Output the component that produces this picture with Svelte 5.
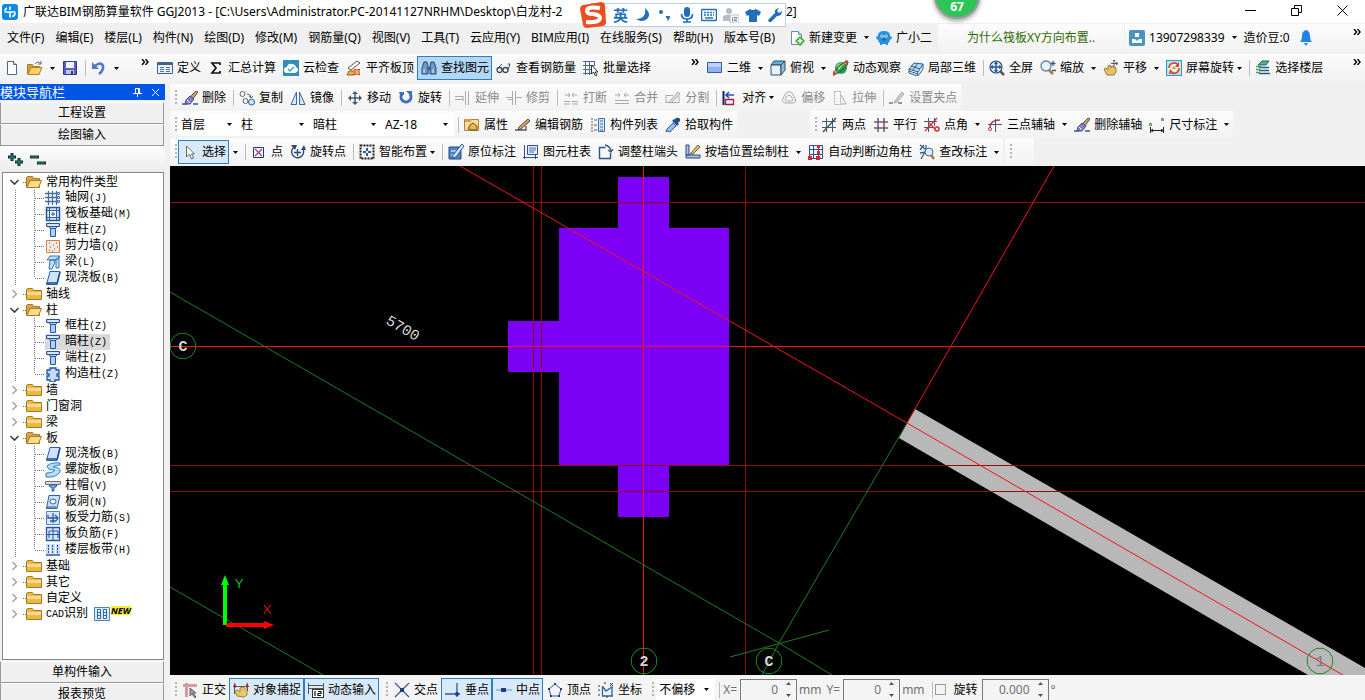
<script lang="ts">
  type Item = { icon?: string; text?: string; split?: boolean; drop?: boolean; off?: boolean; on?: boolean; sep?: boolean; name?: string };

  const menus = ['文件(F)', '编辑(E)', '楼层(L)', '构件(N)', '绘图(D)', '修改(M)', '钢筋量(Q)', '视图(V)', '工具(T)', '云应用(Y)', 'BIM应用(I)', '在线服务(S)', '帮助(H)', '版本号(B)'];

  const fileTools: Item[] = [
    { icon: 'new', name: '新建' },
    { icon: 'open', name: '打开', split: true },
    { icon: 'save', name: '保存' },
    { sep: true },
    { icon: 'undo', name: '撤销', split: true },
  ];
  const mainTools: Item[] = [
    { icon: 'define', text: '定义' },
    { icon: 'sigma', text: '汇总计算' },
    { icon: 'cloud', text: '云检查' },
    { icon: 'slabtop', text: '平齐板顶' },
    { icon: 'binoculars', text: '查找图元', on: true },
    { icon: 'glasses', text: '查看钢筋量' },
    { icon: 'batch', text: '批量选择' },
  ];
  const viewTools: Item[] = [
    { icon: 'plane', text: '二维', split: true },
    { icon: 'cube', text: '俯视', split: true },
    { icon: 'orbit', text: '动态观察' },
    { icon: 'part3d', text: '局部三维' },
    { sep: true },
    { icon: 'full', text: '全屏' },
    { icon: 'zoom', text: '缩放', split: true },
    { icon: 'pan', text: '平移', split: true },
    { icon: 'screenrot', text: '屏幕旋转', drop: true },
    { sep: true },
    { icon: 'floors', text: '选择楼层' },
  ];
  const editTools: Item[] = [
    { icon: 'brush', text: '删除' },
    { sep: true },
    { icon: 'copy', text: '复制' },
    { icon: 'mirror', text: '镜像' },
    { sep: true },
    { icon: 'move', text: '移动' },
    { icon: 'rotate', text: '旋转' },
    { sep: true },
    { icon: 'extend', text: '延伸', off: true },
    { icon: 'trim', text: '修剪', off: true },
    { sep: true },
    { icon: 'break', text: '打断', off: true },
    { icon: 'join', text: '合并', off: true },
    { icon: 'divide', text: '分割', off: true },
    { sep: true },
    { icon: 'align', text: '对齐', drop: true },
    { icon: 'offset', text: '偏移', off: true },
    { icon: 'stretch', text: '拉伸', off: true },
    { sep: true },
    { icon: 'grippt', text: '设置夹点', off: true },
  ];
  const combos = [
    { label: '楼层', value: '首层' },
    { label: '构件大类', value: '柱' },
    { label: '构件类型', value: '暗柱' },
    { label: '构件名称', value: 'AZ-18' },
  ];
  const memberTools: Item[] = [
    { sep: true },
    { icon: 'props', text: '属性' },
    { icon: 'editbar', text: '编辑钢筋' },
    { icon: 'list', text: '构件列表' },
    { icon: 'picker', text: '拾取构件' },
  ];
  const axisTools: Item[] = [
    { icon: 'axis2', text: '两点' },
    { icon: 'parallel', text: '平行' },
    { icon: 'ptangle', text: '点角', split: true },
    { icon: 'axis3', text: '三点辅轴', split: true },
    { icon: 'brush', text: '删除辅轴' },
    { icon: 'dim', text: '尺寸标注', split: true },
  ];
  const drawTools: Item[] = [
    { icon: 'cursor', text: '选择', on: true, split: true },
    { sep: true },
    { icon: 'point', text: '点' },
    { icon: 'rotpoint', text: '旋转点' },
    { sep: true },
    { icon: 'smart', text: '智能布置', drop: true },
    { sep: true },
    { icon: 'note', text: '原位标注' },
    { icon: 'coltable', text: '图元柱表' },
    { icon: 'adjust', text: '调整柱端头' },
    { icon: 'bywall', text: '按墙位置绘制柱', split: true },
    { icon: 'corner', text: '自动判断边角柱' },
    { icon: 'check', text: '查改标注', split: true },
  ];
  const snapTools: Item[] = [
    { icon: 'ortho', text: '正交' },
    { icon: 'snap', text: '对象捕捉', on: true },
    { icon: 'dyn', text: '动态输入', on: true },
  ];
  const pointTools: Item[] = [
    { icon: 'cross', text: '交点' },
    { icon: 'perp', text: '垂点', on: true },
    { icon: 'mid', text: '中点', on: true },
    { icon: 'vertex', text: '顶点' },
    { icon: 'coord', text: '坐标' },
  ];

  type Leaf = { icon: string; text: string; key: string };
  const tree: { text: string; pre?: string; items?: Leaf[]; badge?: boolean }[] = [
    {
      text: '常用构件类型',
      items: [
        { icon: 'tgrid', text: '轴网', key: '(J)' },
        { icon: 'raft', text: '筏板基础', key: '(M)' },
        { icon: 'column', text: '框柱', key: '(Z)' },
        { icon: 'wall', text: '剪力墙', key: '(Q)' },
        { icon: 'beam', text: '梁', key: '(L)' },
        { icon: 'slab', text: '现浇板', key: '(B)' },
      ],
    },
    { text: '轴线' },
    {
      text: '柱',
      items: [
        { icon: 'column', text: '框柱', key: '(Z)' },
        { icon: 'column', text: '暗柱', key: '(Z)' },
        { icon: 'column', text: '端柱', key: '(Z)' },
        { icon: 'conscol', text: '构造柱', key: '(Z)' },
      ],
    },
    { text: '墙' },
    { text: '门窗洞' },
    { text: '梁' },
    {
      text: '板',
      items: [
        { icon: 'slab', text: '现浇板', key: '(B)' },
        { icon: 'spiral', text: '螺旋板', key: '(B)' },
        { icon: 'cap', text: '柱帽', key: '(V)' },
        { icon: 'hole', text: '板洞', key: '(N)' },
        { icon: 'slabbar', text: '板受力筋', key: '(S)' },
        { icon: 'negbar', text: '板负筋', key: '(F)' },
        { icon: 'strip', text: '楼层板带', key: '(H)' },
      ],
    },
    { text: '基础' },
    { text: '其它' },
    { text: '自定义' },
    { pre: 'CAD', text: '识别', badge: true },
  ];
  let selected = $state('暗柱');

  const line = (c: string) => `stroke="${c}" fill="none"`;
  const icons: Record<string, string> = {
    app: `<rect width="16" height="16" rx="3" fill="#0b8be6"/><path d="M8 2.500V6M8 8v5.500M2.500 8h11M5 4Q3 5 3 7M13 9q0 3-3 3.500" stroke="#fff" stroke-width="1.600" fill="none"/>`,
    newchange: `<path d="M2.500 1.500h7l3 3v10h-10z" fill="#fff" stroke="#5a92bd"/><path d="M9.500 1.500v3h3" fill="#cfe3f3" stroke="#5a92bd"/><path d="M11 6l5 5-5 5-5-5z" fill="#3fae2a"/><path d="M11 8.500v5M8.500 11h5" stroke="#fff" stroke-width="1.500"/>`,
    mascot: `<path d="M8 1q6 0 6 5l2 1-1 3-1-1q0 3-2 4v2h-2v-1H6v1H4v-2q-2-1-2-4l-1 1-1-3 2-1q0-5 6-5z" fill="#1f93dc"/><circle cx="6" cy="6" r="1.600" fill="#fff"/><circle cx="10" cy="6" r="1.600" fill="#fff"/><circle cx="6" cy="6" r=".7" fill="#124"/><circle cx="10" cy="6" r=".7" fill="#124"/><path d="M6 9h4q-2 3-4 0z" fill="#0c4d86"/>`,
    user: `<rect width="16" height="16" rx="2" fill="#4a93bb"/><path d="M6 3h4v4H6z" fill="#fff"/><path d="M3 13V9h3l2 2 2-2h3v4z" fill="#fff"/>`,
    bell: `<path d="M8 0q4 1 4 6 0 4 2 6H2q2-2 2-6 0-5 4-6z" fill="#2383ee"/><path d="M6 13h4l-2 3z" fill="#2383ee"/>`,
    new: `<path d="M3.500 1.500h6l3 3v10h-9z" fill="#fff" stroke="#53657f"/><path d="M9.500 1.500v3h3" fill="#dbe4f0" stroke="#53657f"/>`,
    open: `<path d="M.500 14V4.500h5l1 2h6V14z" fill="#d59b32" stroke="#a7792c"/><path d="M1 14.500l3-7h11l-3 7z" fill="#f8cf68" stroke="#b98023"/><path d="M8 4q3-4 6 0M14 1v3h-3" stroke="#496c91" fill="none"/>`,
    save: `<path d="M1.500 1.500h13v13h-13z" fill="#5961bd" stroke="#353b8b"/><path d="M4 2h8v6H4z" fill="#f1f4fb"/><path d="M4 10h8v4H4z" fill="#bcc5e5"/><path d="M9 11h2v3H9z" fill="#30357a"/>`,
    undo: `<path d="M4 6q6-5 8 0 1 4-4 8" stroke="#4f78c4" stroke-width="2.600" fill="none"/><path d="M1 2v7h7z" fill="#4f78c4"/>`,
    define: `<path d="M.500 2.500h15v11H.500z" fill="#edf3fb" stroke="#3f628e"/><path d="M1 4h14" stroke="#3f628e" stroke-width="2"/><path d="M3 7.500h4M3 9.500h4M3 11.500h4M9 7.500h4M9 9.500h4M9 11.500h4" stroke="#4974a5"/>`,
    sigma: `<path d="M12 5V3H4l4 5-4 5h8v-2" stroke="#111" stroke-width="1.700" fill="none"/>`,
    cloud: `<rect width="16" height="16" fill="#328eb8"/><path d="M4 13q-3 0-3-3t3-3q1-4 5-3 3 0 4 3 2 1 2 3t-3 3z" fill="#fff"/><path d="M5 9l2 2 4-4" stroke="#3aa8c6" stroke-width="1.500" fill="none"/>`,
    slabtop: `<path d="M2 8l9-7 3 2-9 7z" fill="#fff" stroke="#555"/><path d="M3 11h5v4H1z" fill="#f4b23d" stroke="#a35a1b"/><path d="M8 9h6v6H8z" fill="#c9412c"/><path d="M8 11h6M8 13h6M11 9v6" stroke="#ffd08a"/>`,
    binoculars: `<path d="M3 2h3l1 4v8H1V8zM10 2h3l2 6v6H9V6z" fill="#6f98c4" stroke="#244c7b"/><path d="M6 7h4v3H6z" fill="#315f91"/><path d="M3 9v4M12 9v4" stroke="#e9f3fd"/>`,
    glasses: `<circle cx="3.500" cy="10" r="2.500" ${line('#364b60')} stroke-width="1.300"/><circle cx="9.500" cy="10" r="2.500" ${line('#364b60')} stroke-width="1.300"/><path d="M6 9h1M2 8l4-4M12 10l2-6h-2" ${line('#364b60')}/>`,
    batch: `<path d="M0 1.500h12M0 5.500h12M0 9.500h8M0 13.500h8M2.500 1v14M6.500 1v14M11.500 1v5" ${line('#4d6c8c')}/><path d="M8.500 5v9l2-2 2 4 1.500-1-2-3h3z" fill="#fff" stroke="#333"/>`,
    plane: `<path d="M.500 2.500h14v10H.500z" fill="#8fb2f0" stroke="#365f9f"/><path d="M1 3h13v4H1z" fill="#bcd2fa"/>`,
    cube: `<path d="M4 1h11l-4 4H1z" fill="#62b1dd" stroke="#294f71"/><path d="M1 5h10v10H1z" fill="#e8f1f7" stroke="#294f71"/><path d="M11 5l4-4v9l-4 5z" fill="#9db9ce" stroke="#294f71"/>`,
    orbit: `<circle cx="8" cy="8" r="6" fill="#2f9c55"/><path d="M3 6q4-5 8-2l-5 6z" fill="#a7df70"/><path d="M1 14Q2 7 14 1q3 4-9 12z" ${line('#365')} stroke-width="1.300"/><path d="M12 0l4 2-3 4zM0 11l4 3-4 2z" fill="#d33b25"/>`,
    part3d: `<path d="M1 9l5-6 9 1-5 8z" fill="#b7dbf5"/><path d="M1 9v4l8 3 1-4M1 9l9 3 5-8-9-1zM10 16l5-7V4M3 6l9 3M5 10l5-7M1 11l9 3" ${line('#285f8e')}/>`,
    full: `<circle cx="7" cy="7" r="6" fill="#dcecff" stroke="#384f67" stroke-width="1.200"/><path d="M7 2v10M2 7h10" ${line('#285896')} stroke-width="1.500"/><path d="M5 4l2-3 2 3zM5 10l2 3 2-3zM4 5L1 7l3 2zM10 5l3 2-3 2z" fill="#285896"/><path d="M11 11l4 4" stroke="#6b5141" stroke-width="2.500"/>`,
    zoom: `<circle cx="6" cy="6" r="5" fill="#e8f4fd" stroke="#6a8298" stroke-width="1.300"/><path d="M9 10l4 4" stroke="#a57b42" stroke-width="2.500"/><path d="M13 1v5M10.500 3.500h5M12 10.500h4" stroke="#355784" stroke-width="1.300"/>`,
    pan: `<path d="M4 15L1 9l2-1 2 2V6l2-1 1 3 1-2 2 1 2 1v4l-2 3z" fill="#e9c26e" stroke="#a27430"/><path d="M11 0v7M8 3.500h6M10 1l1-1 1 1M13 2l2 1.500-2 1.500" ${line('#555')}/>`,
    screenrot: `<rect x=".500" y=".500" width="15" height="15" fill="#b5e2f7" stroke="#3f92bc"/><circle cx="8" cy="8" r="6" fill="#fff6d5"/><path d="M3 8a5 5 0 0 1 9-3M13 8a5 5 0 0 1-7 5" ${line('#d84343')} stroke-width="1.700"/><path d="M13 2v5H9zM3 14l1-5 4 4z" fill="#d84343"/><path d="M6 9l2-3 2 3z" fill="#7bb35b"/>`,
    floors: `<path d="M3 5l4-4h7l-3 4z" fill="#59b57e" stroke="#245e85"/><path d="M4 7.500h10M4 10.500h10M4 13.500h11" stroke="#245e85" stroke-width="1.600"/><path d="M1 6.500h5M1 9.500h4M1 12.500h4" stroke="#45a057" stroke-width="1.300"/>`,
    brush: `<path d="M14 1l2 1-6 8-3-2z" fill="#c5a16b" stroke="#555"/><path d="M8 6l4 3-4 5H3l1-4z" fill="#8580c7" stroke="#4c4780"/><path d="M5 10l3 3" stroke="#fff"/><path d="M0 14h5M11 14h5" stroke="#315f91" stroke-width="1.600"/>`,
    copy: `<circle cx="3.500" cy="4" r="2.500" ${line('#596774')}/><circle cx="6.500" cy="11" r="2.500" ${line('#596774')}/><circle cx="12.500" cy="12" r="3" fill="#c9e3fa" stroke="#315f91"/><path d="M8 4q4 0 4 4M10 6l2 2 2-2" ${line('#596774')}/>`,
    mirror: `<path d="M6.500 2v12.500H1zM9.500 2v12.500H15z" fill="#d7e7fb" stroke="#3e679a"/>`,
    move: `<path d="M8 2v12M2 8h12" stroke="#405a75" stroke-width="1.500"/><path d="M5 4l3-3 3 3zM5 12l3 3 3-3zM4 5L1 8l3 3zM12 5l3 3-3 3z" fill="#405a75"/>`,
    rotate: `<path d="M4 4a5 5 0 1 0 8 0" stroke="#3c70b9" stroke-width="3" fill="none"/><path d="M8 1h6v6z" fill="#3c70b9"/><path d="M1 2h5v3H2z" fill="#3c70b9"/>`,
    extend: `<path d="M0 6.500h8M0 9.500h8M10.500 1v14M13.500 1v14" ${line('#aaa')}/><path d="M8 6v5" stroke="#aaa"/>`,
    trim: `<path d="M6.500 1v14M9.500 1v14M0 7.500h6M10 7.500h6M2 9.500h4" ${line('#aaa')}/>`,
    break: `<path d="M1 11.500h6M9 11.500h6M1 14h6M9 14h6M2 5h4M5 3l2 2-2 2M14 5h-4M11 3L9 5l2 2" ${line('#aaa')}/>`,
    join: `<path d="M1 10.500h14M1 13.500h14M1 5h5M4 3l2 2-2 2M15 5h-5M12 3l-2 2 2 2" ${line('#aaa')}/>`,
    divide: `<path d="M1 5.500h7M1 12.500h13V6M1 5v8" ${line('#aaa')}/><path d="M4 12L13 2l2 2-9 9z" fill="#ddd" stroke="#aaa"/>`,
    align: `<path d="M1.500 1v14" stroke="#17215d" stroke-width="2"/><path d="M4 5h8M7 2L4 5l3 3" ${line('#224eb3')} stroke-width="1.600"/><path d="M3.500 9.500h8v5h-8z" fill="#eef" stroke="#a4213e" stroke-width="1.300"/>`,
    offset: `<path d="M4 13q-4-1-2-5l3-5q3-3 6 0l3 5q2 4-2 5zM5 11q-2-1 0-3l1-2q2-2 4 0l1 2q2 2 0 3z" ${line('#aaa')}/>`,
    stretch: `<path d="M2.500 1.500h6v13h-6z" ${line('#aaa')} stroke-dasharray="2 1"/><path d="M9 5l5 9H9" ${line('#aaa')}/>`,
    grippt: `<path d="M0 13h4M9 13h4" stroke="#999" stroke-width="2"/><path d="M6 11L13 2l2 2-7 8-3 1z" fill="#ccc" stroke="#aaa"/>`,
    props: `<path d="M.500 2.500h14v11h-14z" fill="#f8dda0" stroke="#b0803c"/><path d="M1 2h6v3H1z" fill="#d7a040"/><path d="M4 12l2-4 3-2 4 3v4H8z" fill="#e9b844" stroke="#73501e"/>`,
    editbar: `<path d="M0 13h11V9" ${line('#555')} stroke-width="1.300"/><path d="M4 10L13 2l2 2-9 8-3 1z" fill="#d9a05b" stroke="#5c4935"/>`,
    list: `<path d="M8.500 1.500h6v13h-6z" fill="#d7e8fb" stroke="#3d6ca0"/><path d="M10 4h3M10 7h3M10 10h3M10 13h3" stroke="#3d6ca0"/><path d="M1 2h2M1 5h2M1 8h2M1 11h2M1 14h2M4 3h3M4 8h3M4 13h3" stroke="#555"/>`,
    picker: `<path d="M9 3l2-2q3-1 4 1t-1 3l-2 2z" fill="#214d8a"/><path d="M8 3l5 5" stroke="#214d8a" stroke-width="2.500"/><path d="M8 6l3 3-6 6-3-1-1 1 1-3z" fill="#8fc1e8" stroke="#2f66a3"/>`,
    axis2: `<path d="M0 4.500h14M0 10.500h14M4.500 1v14M10.500 1v14" ${line('#4b5580')}/><path d="M1 15L14 1" stroke="#3b5b3b" stroke-width="1.400"/>`,
    parallel: `<path d="M1 5h14M1 11h14" stroke="#a34a58" stroke-width="1.400"/><path d="M5 1v14M11 1v14" stroke="#4b5580" stroke-width="1.400"/>`,
    ptangle: `<path d="M0 4.500h13M0 10.500h9M4.500 1v14M10.500 1v8" ${line('#4b5580')}/><path d="M1 14L13 1M4 5l8 8" stroke="#c33" stroke-width="1.300"/><circle cx="13" cy="12" r="2" fill="#fff" stroke="#c33" stroke-width="1.500"/>`,
    axis3: `<path d="M3 13Q2 3 13 3" ${line('#c0333d')} stroke-width="1.500"/><path d="M1 7.500h14M8.500 2v13" ${line('#4b5580')}/><circle cx="3" cy="12" r="1.500" fill="#fff" stroke="#c33"/>`,
    dim: `<path d="M1.500 10v6M14.500 10v6M2 13.500h12M4 12l-2 1.500L4 15M12 12l2 1.500-2 1.500" ${line('#222')}/><path d="M0 6h3v3H0zM12 1h3v3h-3z" fill="#70aa70"/>`,
    cursor: `<path d="M4.500 2v11l3-3 2 5 2-1-2-4h3z" fill="#fff" stroke="#666"/>`,
    point: `<path d="M2.500 3.500h10v10h-10z" fill="#fff" stroke="#223377"/><path d="M4 5l7 7M11 5l-7 7" stroke="#9a3b82" stroke-width="1.300"/>`,
    rotpoint: `<path d="M4 3a6 6 0 1 0 9 2M4 8.500h7M7.500 5v7" ${line('#2b4a75')} stroke-width="1.400"/><path d="M1 1h6L5 6zM11 6l3-5 2 5z" fill="#2b4a75"/>`,
    smart: `<rect x="1.500" y="1.500" width="13" height="13" ${line('#222')} stroke-width="2" stroke-dasharray="2 1"/><path d="M8 4v3M8 9v3M4 8h3M9 8h3" stroke="#245a9c" stroke-width="2"/>`,
    note: `<path d="M1 3h12v12H1z" fill="#4c83cb" stroke="#294b7b"/><path d="M3 7h5M3 11h3" stroke="#fff"/><path d="M5 11L14 0l2 2-8 11-4 1z" fill="#cfe6f8" stroke="#345f93"/>`,
    coltable: `<path d="M4.500 1.500h10v9h-10z" fill="#e7effb" stroke="#344d8e"/><path d="M6 4h7M6 6h7M6 8h5" stroke="#4772b7"/><path d="M1.500 1v14M0 13.500h15M12.500 11v4" ${line('#344d8e')}/>`,
    adjust: `<path d="M7.500 3.500h-6v11h11V9" ${line('#335285')} stroke-width="1.400"/><path d="M7 1q5 1 6 6M10 6l3 2 2-3" ${line('#335285')} stroke-width="1.300"/>`,
    bywall: `<path d="M1 1h3v10H1zM1 11h14v3H1z" fill="#a7c4e8" stroke="#294879"/><path d="M6 9l7-8 2 2-7 7H5z" fill="#e5c459" stroke="#6e5c33"/>`,
    corner: `<path d="M1.500 1.500h13v13h-13z" fill="#eef3fa"/><path d="M1.500 1.500h13v13h-13zM1 5.500h14M1 10.500h14M5.500 1v14M10.500 1v14" ${line('#355073')}/><path d="M0 12h4v4H0zM9 1h3v3H9zM9 7h3v3H9zM8 12h4v4H8z" fill="#d2263b"/>`,
    check: `<path d="M1 1l6 5-5 9M1 9l6-1M5 1l-4 5M7 1v5" ${line('#2d6181')} stroke-width="1.300"/><circle cx="10" cy="8" r="4" fill="#dceefb" stroke="#456b8c"/><path d="M12 11l3 4" stroke="#a57b42" stroke-width="2.500"/>`,
    ortho: `<path d="M1 3.500h14M4.500 1v14" stroke="#d69b9b" stroke-width="3"/><path d="M8 6v8l2-2 3 4 1-1-3-4h3z" fill="#999" stroke="#666"/>`,
    snap: `<path d="M1.500 1v11M14.500 1v8M0 4.500h16" ${line('#555')}/><path d="M0 4l3-2v4zM16 4l-3-2v4z" fill="#b23"/><path d="M4 14l-2-5 2-1 3 2V6l3-1 4 3v5l-3 2z" fill="#e8c870" stroke="#a88436"/>`,
    dyn: `<path d="M.500 1v11M15.500 1v11M1 3.500h14M1 6.500h14" ${line('#555')}/><rect x="4.500" y="7.500" width="11" height="8" fill="#fff" stroke="#333"/><path d="M7 9v5M10 9.500h3v2h-3v2h3" ${line('#111')} stroke-width="1.200"/>`,
    cross: `<path d="M1 1l14 14M15 1L1 15" ${line('#3b5f8e')} stroke-width="1.300"/><rect x="6" y="6" width="4" height="4" fill="#1b3f80"/>`,
    perp: `<path d="M0 12h15M12 1v14" ${line('#2b5d9c')} stroke-width="1.300"/><circle cx="12" cy="12" r="2" fill="#1b3f80"/>`,
    mid: `<path d="M0 8h16" stroke="#5f94cf"/><rect x="5" y="6" width="5" height="4" fill="#1b3f80"/>`,
    vertex: `<path d="M8 2l6 5-2 7H4L2 7z" ${line('#2f62a3')}/><path d="M7 1h2v2H7zM1 6h2v2H1zM13 6h2v2h-2zM3 13h2v2H3zM11 13h2v2h-2z" fill="#1b3f80"/>`,
    coord: `<path d="M4.500 4v10H15M5 5l3 4 6-4v9" ${line('#2f62a3')} stroke-width="1.300"/><path d="M0 4h2M0 8h2M0 13h2M6 1h2M12 1l3 3M15 1l-3 3M9 14v2" ${line('#333')}/>`,
    plusplus: `<path d="M5 1v8M1 5h8M12 6v8M8 10h8" stroke="#0d2f30" stroke-width="3"/><path d="M5 2v6M2 5h6M12 7v6M9 10h6" stroke="#2b8c7e"/>`,
    minus: `<path d="M0 5h9M7 11h9" stroke="#0d2f30" stroke-width="3"/><path d="M1 5h7M8 11h7" stroke="#2b8c7e"/>`,
    folder: `<path d="M.500 13.500v-10l1-1h5l1 2h8v9z" fill="#eeb840" stroke="#a7792c"/><path d="M1 6h14v3H1z" fill="#f9dd92"/>`,
    folderopen: `<path d="M.500 13.500v-10l1-1h5l1 2h6v9z" fill="#dba43c" stroke="#a7792c"/><path d="M1 13.500l3-7h11.500l-3 7z" fill="#fbdc88" stroke="#a7792c"/>`,
    tgrid: `<path d="M0 3.500h12M0 7.500h12M0 11.500h12M3.500 1v14M7.500 1v14M11.500 1v14" ${line('#476fa5')} stroke-width="1.300"/><path d="M12.500 2.500h2v2h-2zM12.500 6.500h2v2h-2zM12.500 10.500h2v2h-2z" fill="#fff" stroke="#476fa5"/>`,
    raft: `<path d="M1.500 1.500h13v13h-13z" fill="#d9e8fb" stroke="#2457a0" stroke-width="1.500"/><path d="M4.500 4.500h7v7h-7zM7 7h2v2H7zM4.500 1v3M11.500 1v3M4.500 12v3M11.500 12v3M1 4.500h3M1 11.500h3M12 4.500h3M12 11.500h3" fill="#fff" stroke="#2457a0"/>`,
    column: `<path d="M1.500 1.500h13v3h-2l-2 2v8h-5v-8l-2-2h-2z" fill="#b4d0fa" stroke="#2356a4"/><path d="M3 4.500h10M5 6.500h6" stroke="#2356a4"/><path d="M3 3h10" stroke="#fff"/>`,
    wall: `<path d="M1.500 2.500h13v12h-13z" fill="#f5e9df" stroke="#c6824f"/><path d="M4 5h1M8 7h1M11 5h1M5 9h1M9 11h1M12 9h1M4 12h1M7 13h1" stroke="#555"/>`,
    beam: `<path d="M2 6l3-4h10l-3 4zM5 6h5v2L7 15H4zM10 6l4-3v11h-3V7" fill="#c4ddfa" stroke="#3474b2"/>`,
    slab: `<path d="M5 1.500h10l-3 13H1.500z" fill="#cfe1fb" stroke="#295fae"/><path d="M1.500 13h10M12 14l3-12" stroke="#174b96" stroke-width="1.500"/>`,
    conscol: `<path d="M5 2h6v2h3v4h-2v2h2v4h-4v2H5v-2H2v-4h2V8H2V4h3z" fill="#c5dcfb" stroke="#2356a4" stroke-width="1.300"/>`,
    spiral: `<path d="M15 1Q6 0 2 4q0 4 8 4-2 3-9 3v4q10 1 14-5 1-5-7-5 2-2 7-2z" fill="#b2dcf8" stroke="#2f7fba"/>`,
    cap: `<path d="M.500 3.500h15v3H.500z" fill="#ddd8c8" stroke="#777"/><path d="M4 7h8l-1 2H9v4H7V9H5z" fill="#9bbdf0" stroke="#2356a4"/>`,
    hole: `<path d="M4 1.500h11l-3 13H1.500z" fill="#cfe1fb" stroke="#295fae"/><ellipse cx="8" cy="7.500" rx="3" ry="2.500" fill="#fff" stroke="#295fae"/><path d="M1.500 13h10" stroke="#174b96"/>`,
    slabbar: `<path d="M1.500 1.500h13v13h-13z" fill="#d7e6fa" stroke="#5b80b8"/><path d="M8 3v10M3 5v3h10M10 5l3 3-2 3M5 11h6" ${line('#2a5b9f')} stroke-width="1.300"/>`,
    negbar: `<path d="M1.500 1.500h13v13h-13z" fill="#d7e6fa" stroke="#2457a0" stroke-width="1.300"/><path d="M8 2v12M4 12V5h9v7M2 8.500h12" ${line('#2457a0')}/>`,
    strip: `<path d="M1 2h4v10H1zM6 2h4v10H6zM11 2h4v10h-4z" fill="#c7dcf8"/><path d="M3.500 3v9M7.500 3v9M12.500 3v9" stroke="#2457a0" stroke-dasharray="2 1"/><path d="M1 13h14" stroke="#2457a0" stroke-width="1.500"/>`,
    cad: `<path d="M.500 1.500h15v13H.500z" fill="#d4e8fa" stroke="#4d82ba"/><path d="M3.500 3.500h3v9h-3zM9.500 3.500h3v9h-3z" fill="#eef7ff" stroke="#2868ad"/><path d="M4 6.500h2M4 9.500h2M10 6.500h2M10 9.500h2" stroke="#2868ad"/>`,
    moon: `<path d="M10 1q7 6 2 11-5 4-11 0 11 0 9-11z" fill="#1e70bd"/>`,
    punct: `<circle cx="4" cy="5" r="2" fill="#1e70bd"/><path d="M9 9h4q0 4-3 5 1-2 0-3H9z" fill="#1e70bd"/>`,
    mic: `<rect x="5" y="0" width="6" height="10" rx="3" fill="#1e70bd"/><path d="M2.500 7q0 5 5.500 5t5.500-5M8 12v3M4 15h8" ${line('#1e70bd')} stroke-width="1.700"/>`,
    keyboard: `<rect x=".500" y="2.500" width="15" height="11" rx="1" fill="#fff" stroke="#1e70bd" stroke-width="1.500"/><path d="M3 5.500h10M3 8h10" stroke="#1e70bd" stroke-width="1.500" stroke-dasharray="2 1"/><path d="M4 11h8" stroke="#1e70bd" stroke-width="1.500"/>`,
    person: `<circle cx="6" cy="4" r="3" fill="#b7bcc8"/><path d="M0 14V9q6-3 9 0v5z" fill="#b7bcc8"/><rect x="7" y="8" width="9" height="7" fill="#fff" stroke="#b7bcc8"/><path d="M9.500 10v4M11 10.500h3v1.500h-3v1.500h3" ${line('#8b93a3')}/>`,
    shirt: `<path d="M5 2q3 2 6 0l5 3-2 4-2-1v7H4V8L2 9 0 5z" fill="#1e70bd"/>`,
    wrench: `<path d="M2 15l-1-2 7-7q-1-4 4-5L10 4l2 2 3-2q0 5-5 5l-6 6z" fill="#1e70bd"/>`,
  };

  // 十二边形轴号圈
  const ring = (cx: number, cy: number) =>
    Array.from({ length: 12 }, (_, i) => {
      const a = (i * Math.PI) / 6 + Math.PI / 12;
      return `${(cx + 13 * Math.cos(a)).toFixed(1)},${(cy + 13 * Math.sin(a)).toFixed(1)}`;
    }).join(' ');
  const marks = [
    { x: 183, y: 346, t: 'C' },
    { x: 644, y: 661, t: '2' },
    { x: 769, y: 661, t: 'C' },
    { x: 1320, y: 661, t: '1' },
  ];
</script>

{#snippet icon(name: string)}
  <svg class="icon" viewBox="0 0 16 16" aria-hidden="true">{@html icons[name]}</svg>
{/snippet}

{#snippet arrow()}
  <svg class="arrow" viewBox="0 0 5 3" aria-hidden="true"><path d="M0 0h5L2.500 3z" fill="currentColor" /></svg>
{/snippet}

{#snippet more()}
  <button class="more" aria-label="更多">
    <svg viewBox="0 0 8 6" width="8" height="6"><path d="M1 0l2.500 3L1 6M4.500 0L7 3 4.500 6" fill="none" stroke="#000" stroke-width="1.400" /></svg>
  </button>
{/snippet}

{#snippet tools(items: Item[])}
  {#each items as item}
    {#if item.sep}
      <span class="sep"></span>
    {:else}
      <button class="tool" class:on={item.on} disabled={item.off} aria-label={item.name}>
        {@render icon(item.icon!)}
        {#if item.text}<span>{item.text}</span>{/if}
        {#if item.drop}<span class="drop">{@render arrow()}</span>{/if}
      </button>
      {#if item.split}
        <button class="split" aria-label={(item.text ?? item.name) + '选项'}>{@render arrow()}</button>
      {/if}
    {/if}
  {/each}
{/snippet}

{#snippet spinner(id: string, value: string)}
  <span class="spinner">
    <input {id} type="text" {value} />
    <svg viewBox="0 0 5 15" width="5" height="15" aria-hidden="true"><path d="M0 3h5L2.500 0zM0 12h5L2.500 15z" fill="#555" /></svg>
  </span>
{/snippet}

<div class="app">
  <header class="title">
    {@render icon('app')}
    <span class="caption">广联达BIM钢筋算量软件 GGJ2013 - [C:\Users\Administrator.PC-20141127NRHM\Desktop\白龙村-2</span>
    <span class="tail">2]</span>
    <div class="window-buttons">
      <button aria-label="最小化"><svg viewBox="0 0 11 11"><path d="M0 5.500h11" /></svg></button>
      <button aria-label="还原"><svg viewBox="0 0 11 11"><path d="M.500 3.500h7v7h-7zM3.500 3V.500h7v7H8" /></svg></button>
      <button aria-label="关闭"><svg viewBox="0 0 11 11"><path d="M.500 .500l10 10M10.500 .500l-10 10" /></svg></button>
    </div>
    <div class="ime">
      <svg class="sogou" viewBox="0 0 28 28" aria-hidden="true">
        <path d="M4 4l18-3q3 0 4 3l1 17q0 3-3 4L8 27q-3 0-4-3L1 8q0-3 3-4z" fill="#e94f21" />
        <path d="M21 7Q8 5 8 10q0 3 6 3 7 1 7 4 0 5-14 4" fill="none" stroke="#fff" stroke-width="4" />
      </svg>
      <b>英</b>
      {#each ['moon', 'punct', 'mic', 'keyboard', 'person', 'shirt', 'wrench'] as name}
        {@render icon(name)}
      {/each}
    </div>
    <div class="ball">67</div>
  </header>

  <nav class="menu">
    <div class="menu-items">
      {#each menus as m}
        <button>{m}</button>
      {/each}
    </div>
    <button class="tool">{@render icon('newchange')}<span>新建变更</span></button>
    <button class="split" aria-label="变更选项">{@render arrow()}</button>
    <button class="tool">{@render icon('mascot')}<span>广小二</span></button>
    <div class="tip"><a href="#tip">为什么筏板XY方向布置..</a></div>
    <div class="account">
      <button class="tool">{@render icon('user')}<span>13907298339</span></button>
      <button class="split" aria-label="账号选项">{@render arrow()}</button>
      <span class="beans">造价豆:0</span>
      <button class="tool" aria-label="通知">{@render icon('bell')}</button>
      {@render more()}
    </div>
  </nav>

  <div class="toolbar">
    <div class="group file">{@render tools(fileTools)}{@render more()}</div>
    <div class="group main">{@render tools(mainTools)}{@render more()}</div>
    <div class="group view">{@render tools(viewTools)}{@render more()}</div>
  </div>

  <div class="body">
    <aside>
      <div class="side-title">
        <span>模块导航栏</span>
        <button aria-label="固定"><svg viewBox="0 0 9 9"><path d="M2.500 5V.500h4V5M5.500 0v5M0 5.500h9M4.500 5v4" /></svg></button>
        <button aria-label="关闭"><svg viewBox="0 0 9 9"><path d="M1 1l7 7M8 1L1 8" /></svg></button>
      </div>
      <button class="section">工程设置</button>
      <button class="section">绘图输入</button>
      <div class="side-tools">
        <button aria-label="全部展开">{@render icon('plusplus')}</button>
        <button aria-label="全部折叠">{@render icon('minus')}</button>
      </div>
      <ul class="tree">
        {#each tree as node}
          <li>
            <div class="node">
              <svg class="twig" viewBox="0 0 23 16" aria-hidden="true">
                {#if node.items}
                  <path d="M7.500 6l4 4 4-4" stroke="#404040" stroke-width="1.600" fill="none" />
                {:else}
                  <path d="M9.500 4l4 4-4 4" stroke="#a0a0a0" stroke-width="1.400" fill="none" />
                {/if}
                <path d="M20 8.500h3" stroke="#777" stroke-dasharray="1 1" />
              </svg>
              {@render icon(node.items ? 'folderopen' : 'folder')}
              <span class="name">{#if node.pre}<span class="key">{node.pre}</span>{/if}{node.text}</span>
              {#if node.badge}{@render icon('cad')}<em>NEW</em>{/if}
            </div>
            {#if node.items}
              <ul>
                {#each node.items as leaf, i}
                  <li class="leaf">
                    <svg class="branch" viewBox="0 0 42 16" aria-hidden="true">
                      <path d="M12.500 0v16M31.500 0v{i === node.items.length - 1 ? 8 : 16}M32 8.500h10" stroke="#777" stroke-dasharray="1 1" fill="none" />
                    </svg>
                    <button class:selected={selected === leaf.text} onclick={() => (selected = leaf.text)}>
                      {@render icon(leaf.icon)}
                      <span>{leaf.text}<span class="key">{leaf.key}</span></span>
                    </button>
                  </li>
                {/each}
              </ul>
            {/if}
          </li>
        {/each}
      </ul>
      <button class="section">单构件输入</button>
      <button class="section">报表预览</button>
    </aside>

    <main>
      <div class="row">
        <div class="bar"><span class="grip"></span>{@render tools(editTools)}</div>
      </div>
      <div class="row">
        <div class="bar">
          <span class="grip"></span>
          {#each combos as c}
            <label class="combo">
              <select aria-label={c.label}><option>{c.value}</option></select>
              {@render arrow()}
            </label>
          {/each}
          {@render tools(memberTools)}
        </div>
        <div class="bar axis"><span class="grip"></span>{@render tools(axisTools)}</div>
      </div>
      <div class="row">
        <div class="bar"><span class="grip"></span>{@render tools(drawTools)}</div>
        <div class="bar stub"><span class="grip"></span></div>
      </div>

      <div class="canvas">
        <svg viewBox="170 166 1195 509" preserveAspectRatio="xMinYMin slice">
          <path d="M618 177h51v51h60v237h-60v52h-51v-52h-59v-93h-51v-51h51v-93h59z" fill="#7b00f5" />
          <path d="M915 409L1365 668v7h-57L899 438z" fill="#b8b8b8" />
          <path class="thin" stroke="#960a10" d="M170 202.500h1195M170 465.500h1195M170 491.500h1195M533.500 166v509M541.500 166v509M745.500 166v509" />
          <path class="thin" stroke="#f0141c" d="M170 346.500h1195M643.500 166v509" />
          <path d="M460 166L907 423L1343 675M1054 166L907 423" fill="none" stroke="#f0141c" />
          <path d="M907 423L779 643L762 675M170 292L779 643L832 675M170 587L323 675M730 657L829 630" fill="none" stroke="#1c7a22" />
          {#each marks as m}
            <polygon points={ring(m.x, m.y)} fill="none" stroke="#1c8a22" />
            <text class="mark" class:dim={m.t === '1'} x={m.x} y={m.y + 5}>{m.t}</text>
          {/each}
          <text class="length" transform="translate(403 328) rotate(30)" y="5">5700</text>
          <path d="M223 625v-40h-2l4-10 4 10h-2v40z" fill="#00ff00" />
          <path d="M226 623h38v-2l10 4-10 4v-2h-38z" fill="#ff0000" />
          <text class="axis-y" x="239" y="588">Y</text>
          <text class="axis-x" x="267" y="614">X</text>
        </svg>
      </div>

      <footer>
        <span class="grip"></span>
        {@render tools(snapTools)}
        <span class="grip wide"></span>
        {@render tools(pointTools)}
        <span class="grip wide"></span>
        <label class="combo shift">
          <select aria-label="偏移方式"><option>不偏移</option></select>
          {@render arrow()}
        </label>
        <span class="sep"></span>
        <label class="unit" for="dx">X=</label>
        {@render spinner('dx', '0')}
        <span class="unit">mm</span>
        <label class="unit" for="dy">Y=</label>
        {@render spinner('dy', '0')}
        <span class="unit">mm</span>
        <span class="sep"></span>
        <input id="turn" type="checkbox" />
        <label class="turn" for="turn">旋转</label>
        <span class="angle">{@render spinner('angle', '0.000')}</span>
        <span class="unit">°</span>
      </footer>
    </main>
  </div>
</div>

<style>
  :global(body) {
    margin: 0;
    overflow: hidden;
    background: #f0f0f0;
  }

  .app {
    display: flex;
    flex-direction: column;
    height: 100vh;
    font-family: 'Noto Sans', 'Noto Sans CJK SC', sans-serif;
    font-size: 12px;
    line-height: 16px;
    color: #000;
    white-space: nowrap;
  }

  button,
  select,
  input {
    font: inherit;
    color: inherit;
    margin: 0;
    padding: 0;
    border: none;
    background: none;
  }

  ul {
    list-style: none;
    margin: 0;
    padding: 0;
  }

  .icon {
    width: 16px;
    height: 16px;
    flex: none;
  }

  .title {
    position: relative;
    display: flex;
    align-items: center;
    height: 23px;
    padding-left: 2px;
    background: #fff;
  }

  .caption {
    width: 570px;
    margin-left: 5px;
    overflow: hidden;
  }

  .tail {
    margin-left: 193px;
  }

  .window-buttons {
    display: flex;
    margin-left: auto;
  }

  .window-buttons button {
    width: 46px;
    height: 20px;
  }

  .window-buttons svg {
    width: 11px;
    height: 11px;
    fill: none;
    stroke: #000;
  }

  .ime {
    position: absolute;
    top: 3px;
    left: 590px;
    z-index: 2;
    display: flex;
    align-items: center;
    gap: 6px;
    width: 194px;
    height: 22px;
    border: 1px solid #b9cfe2;
    background: #fff;
    box-sizing: content-box;
  }

  .ime b {
    margin-right: 1px;
    font-size: 15px;
    color: #1e70bd;
  }

  .sogou {
    width: 28px;
    height: 28px;
    margin-left: -12px;
    flex: none;
  }

  .ball {
    position: absolute;
    top: -27px;
    left: 934px;
    z-index: 2;
    width: 42px;
    height: 42px;
    border: 2px solid #8f9f96;
    border-radius: 50%;
    background: #2fc456;
    box-shadow: 0 2px 5px #999;
    color: #fff;
    font-weight: bold;
    line-height: 64px;
    text-align: center;
  }

  .menu {
    display: flex;
    align-items: center;
    height: 29px;
  }

  .menu-items {
    display: flex;
    gap: 11px;
    padding: 0 10px 0 7px;
  }

  .tip,
  .account {
    display: flex;
    align-items: center;
    height: 28px;
    background: linear-gradient(#fcfcfc, #f2f2f2);
  }

  .tip {
    width: 186px;
    margin-left: 3px;
    justify-content: center;
  }

  .tip a {
    color: #2c6a00;
    text-decoration: none;
  }

  .account {
    flex: 1;
    margin-left: 1px;
  }

  .beans {
    margin: 0 4px;
  }

  .toolbar {
    display: flex;
    height: 28px;
    margin: 2px 0;
  }

  .group {
    display: flex;
    align-items: center;
    background: linear-gradient(#fbfbfb, #f1f1f1);
  }

  .group.file {
    width: 153px;
  }

  .group.main {
    width: 550px;
  }

  .group.view {
    flex: 1;
  }

  .more {
    align-self: flex-start;
    display: flex;
    margin: 5px 4px 0 auto;
  }

  .tool {
    display: flex;
    align-items: center;
    gap: 4px;
    height: 24px;
    padding: 0 3px 0 4px;
  }

  .tool:disabled {
    color: #8a8a8a;
  }

  .tool.on {
    background: #d9e9f7;
    box-shadow: inset 0 0 0 1px #2a7fc4;
  }

  .group .tool.on {
    background: #b3d7f5;
  }

  .arrow {
    width: 5px;
    height: 3px;
    flex: none;
  }

  .drop {
    display: flex;
    margin-left: -1px;
  }

  .split {
    display: flex;
    align-items: center;
    width: 12px;
    height: 24px;
    padding-left: 4px;
  }

  .sep {
    flex: none;
    width: 1px;
    height: 16px;
    margin: 0 1px 0 4px;
    background: #bcbcbc;
  }

  .grip {
    flex: none;
    width: 2px;
    height: 16px;
    margin: 0 1px 0 5px;
    background: repeating-linear-gradient(#b4b4b4 0 2px, transparent 2px 4px);
  }

  .grip.wide {
    margin: 0 2px 0 7px;
  }

  .body {
    flex: 1;
    min-height: 0;
    display: grid;
    grid-template-columns: 170px minmax(0, 1fr);
  }

  aside {
    display: flex;
    flex-direction: column;
    min-height: 0;
    padding-right: 5px;
    margin-bottom: -5px;
  }

  .side-title {
    display: flex;
    align-items: center;
    gap: 9px;
    height: 16px;
    margin-bottom: 2px;
    padding-right: 5px;
    background: #0055e5;
    color: #fff;
  }

  .side-title span {
    flex: 1;
    font-size: 13px;
  }

  .side-title button {
    display: flex;
  }

  .side-title svg {
    width: 9px;
    height: 9px;
    fill: none;
    stroke: #fff;
  }

  .section {
    flex: none;
    height: 22px;
    margin-right: 1px;
    border: 1px solid #999;
    border-top-color: #fff;
    background: #f0f0f0;
  }

  .side-tools {
    display: flex;
    gap: 7px;
    height: 26px;
    padding: 5px 0 0 7px;
    box-sizing: border-box;
    background: linear-gradient(#fdfdfd, #ececec);
  }

  .tree {
    flex: 1;
    min-height: 0;
    margin: 0 1px 1px 2px;
    padding-top: 1px;
    border: 1px solid #888;
    background: #fff;
  }

  .node,
  .leaf,
  .leaf button {
    display: flex;
    align-items: center;
    height: 16px;
  }

  .twig {
    width: 23px;
    height: 16px;
  }

  .branch {
    width: 42px;
    height: 16px;
  }

  .node .name {
    margin: 0 6px 0 4px;
  }

  .node em {
    align-self: flex-start;
    margin-left: 1px;
    font-size: 9px;
    font-weight: bold;
    line-height: 9px;
    background: #ffe92e;
  }

  .leaf button {
    gap: 4px;
    padding: 0 3px 0 0;
  }

  .leaf button.selected {
    background: #d9d9d9;
  }

  .key {
    font-family: 'Liberation Mono', monospace;
    font-size: 10px;
  }

  main {
    display: flex;
    flex-direction: column;
    min-height: 0;
  }

  .row {
    display: flex;
    flex: none;
    height: 27px;
  }

  .row:nth-child(3) {
    height: 28px;
  }

  .bar {
    display: flex;
    align-items: center;
    padding-right: 1px;
    background: linear-gradient(#fcfcfc, #f2f2f2);
  }

  .bar.axis {
    margin-left: 73px;
  }

  .bar.stub {
    width: 28px;
    margin-left: 2px;
  }

  .combo {
    display: flex;
    align-items: center;
    width: 72px;
    height: 22px;
    background: #fff;
  }

  .combo:nth-child(2) {
    width: 60px;
  }

  .combo.shift {
    width: 59px;
  }

  .combo select {
    flex: 1;
    min-width: 0;
    height: 20px;
    padding-left: 3px;
    appearance: none;
  }

  .combo .arrow {
    margin: 0 6px 0 3px;
  }

  .canvas {
    flex: 1;
    min-height: 0;
    background: #000;
  }

  .canvas svg {
    display: block;
    width: 100%;
    height: 100%;
  }

  .thin {
    fill: none;
    shape-rendering: crispEdges;
  }

  .mark,
  .length {
    font-family: 'Liberation Mono', monospace;
    font-size: 15px;
    text-anchor: middle;
    fill: #d8d8d8;
  }

  .mark {
    font-weight: bold;
  }

  .mark.dim {
    font-weight: normal;
    fill: #777;
  }

  .axis-x,
  .axis-y {
    font-family: 'Liberation Sans', sans-serif;
    font-size: 13px;
    text-anchor: middle;
    fill: #d01010;
  }

  .axis-y {
    fill: #10c010;
  }

  footer {
    display: flex;
    align-items: center;
    flex: none;
    height: 25px;
    padding-top: 4px;
    box-sizing: border-box;
    background: #f4f4f4;
  }

  .unit {
    margin: 0 3px 0 2px;
    color: #707070;
  }

  .spinner {
    display: flex;
    align-items: center;
    width: 57px;
    height: 22px;
    padding-right: 5px;
    border: 1px solid #7a7a7a;
    box-sizing: border-box;
    background: #f4f4f4;
    color: #707070;
  }

  .angle .spinner {
    width: 67px;
  }

  .spinner input {
    flex: 1;
    min-width: 0;
    margin-right: 8px;
    text-align: right;
  }

  footer input[type='checkbox'] {
    appearance: none;
    width: 11px;
    height: 11px;
    margin: 0 8px 0 1px;
    border: 1px solid #999;
    box-sizing: border-box;
  }

  .turn {
    margin-right: 4px;
  }
</style>
